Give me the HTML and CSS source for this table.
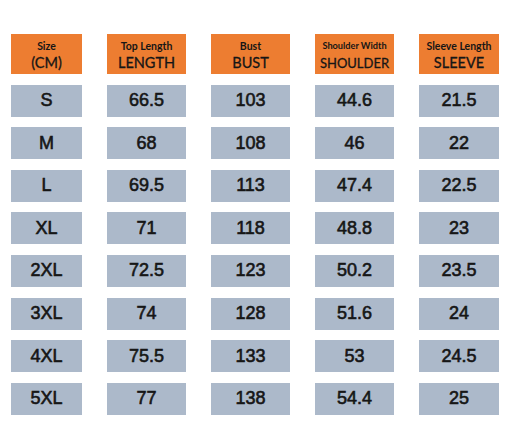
FILE: index.html
```html
<!DOCTYPE html>
<html lang="en">
<head>
  <meta charset="UTF-8" />
  <title>Size Chart</title>
  <link rel="stylesheet" href="styles.css">
</head>
<body>
  <div class="chart">
    <div class="head"><span class="sub">Size</span><span class="main">(CM)</span></div>
    <div class="head"><span class="sub">Top Length</span><span class="main">LENGTH</span></div>
    <div class="head"><span class="sub">Bust</span><span class="main">BUST</span></div>
    <div class="head head-narrow"><span class="sub">Shoulder Width</span><span class="main">SHOULDER</span></div>
    <div class="head"><span class="sub">Sleeve Length</span><span class="main">SLEEVE</span></div>

    <div class="cell">S</div><div class="cell">66.5</div><div class="cell">103</div><div class="cell">44.6</div><div class="cell">21.5</div>
    <div class="cell">M</div><div class="cell">68</div><div class="cell">108</div><div class="cell">46</div><div class="cell">22</div>
    <div class="cell">L</div><div class="cell">69.5</div><div class="cell">113</div><div class="cell">47.4</div><div class="cell">22.5</div>
    <div class="cell">XL</div><div class="cell">71</div><div class="cell">118</div><div class="cell">48.8</div><div class="cell">23</div>
    <div class="cell">2XL</div><div class="cell">72.5</div><div class="cell">123</div><div class="cell">50.2</div><div class="cell">23.5</div>
    <div class="cell">3XL</div><div class="cell">74</div><div class="cell">128</div><div class="cell">51.6</div><div class="cell">24</div>
    <div class="cell">4XL</div><div class="cell">75.5</div><div class="cell">133</div><div class="cell">53</div><div class="cell">24.5</div>
    <div class="cell">5XL</div><div class="cell">77</div><div class="cell">138</div><div class="cell">54.4</div><div class="cell">25</div>
  </div>
</body>
</html>
```
FILE: styles.css
```css
* {
  box-sizing: border-box;
}
body {
  margin: 0;
  background: #fff;
  color: #161616;
}

/* size table */
.chart {
  display: grid;
  grid-template-columns: 71px 79px 79px 79px 80px;
  grid-template-rows: 40px repeat(8, 32px);
  column-gap: 25px;
  row-gap: 10.6px;
  padding: 34px 0 0 11px;
}

/* orange header cells */
.head {
  background: #ed7d31;
  display: flex;
  flex-direction: column;
  align-items: center;
  justify-content: center;
  font-family: Lato, "Open Sans", sans-serif;
  font-weight: 700;
  line-height: 1;
  padding-top: 3px;
}
.head .sub {
  font-size: 10.5px;
  margin-bottom: 5px;
}
.head .main {
  font-size: 14.5px;
  font-weight: 400;
  -webkit-text-stroke: 0.3px #161616;
}
/* shoulder column text is squeezed in the original */
.head-narrow .sub {
  font-size: 9.2px;
  margin-bottom: 6px;
}
.head-narrow .main {
  font-size: 13px;
}

/* grey value cells */
.cell {
  background: #acb9ca;
  display: flex;
  align-items: center;
  justify-content: center;
  font-family: "Liberation Sans", Arial, sans-serif;
  font-size: 18px;
  -webkit-text-stroke: 0.6px #161616;
}
```
